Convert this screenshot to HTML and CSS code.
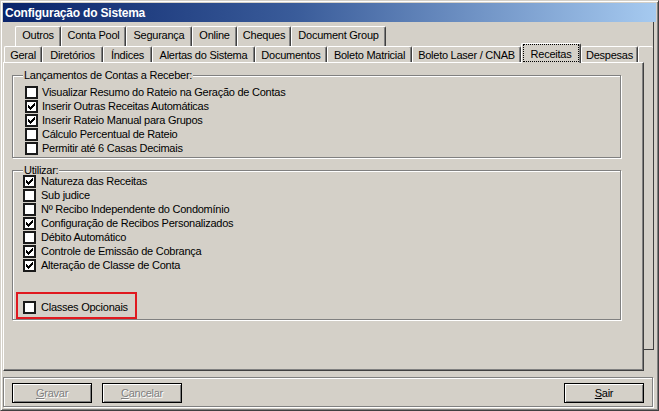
FILE: index.html
```html
<!DOCTYPE html>
<html lang="pt-BR">
<head>
<meta charset="utf-8">
<title>Configuração do Sistema</title>
<link rel="stylesheet" href="styles.css">
</head>
<body>
<div class="window">
  <div class="titlebar">Configuração do Sistema</div>
  <div class="client">
    <div class="frame"></div>
    <div class="tabcontrol">
      <div class="tabrow back">
        <div class="tab t-outros">Outros</div>
        <div class="tab t-contapool">Conta Pool</div>
        <div class="tab t-seguranca">Segurança</div>
        <div class="tab t-online">Online</div>
        <div class="tab t-cheques">Cheques</div>
        <div class="tab t-docgroup">Document Group</div>
      </div>
      <div class="tabrow front">
        <div class="tab t-geral">Geral</div>
        <div class="tab t-diretorios">Diretórios</div>
        <div class="tab t-indices">Índices</div>
        <div class="tab t-alertas">Alertas do Sistema</div>
        <div class="tab t-documentos">Documentos</div>
        <div class="tab t-matricial">Boleto Matricial</div>
        <div class="tab t-laser">Boleto Laser / CNAB</div>
        <div class="tab t-receitas selected"><span class="focus">Receitas</span></div>
        <div class="tab t-despesas">Despesas</div>
        <div class="tab stub"></div>
      </div>
      <div class="page">
        <div class="group g1">
          <div class="legend">Lançamentos de Contas a Receber:</div>
          <div class="item"><span class="cb"></span>Visualizar Resumo do Rateio na Geração de Contas</div>
          <div class="item"><span class="cb"><svg class="check" viewBox="0 0 9 9" width="9" height="9"><path d="M1 3h1v3H1zM2 4h1v3H2zM3 5h1v3H3zM4 4h1v3H4zM5 3h1v3H5zM6 2h1v3H6zM7 1h1v3H7z"/></svg></span>Inserir Outras Receitas Automáticas</div>
          <div class="item"><span class="cb"><svg class="check" viewBox="0 0 9 9" width="9" height="9"><path d="M1 3h1v3H1zM2 4h1v3H2zM3 5h1v3H3zM4 4h1v3H4zM5 3h1v3H5zM6 2h1v3H6zM7 1h1v3H7z"/></svg></span>Inserir Rateio Manual para Grupos</div>
          <div class="item"><span class="cb"></span>Cálculo Percentual de Rateio</div>
          <div class="item"><span class="cb"></span>Permitir até 6 Casas Decimais</div>
        </div>
        <div class="group g2">
          <div class="legend">Utilizar:</div>
          <div class="item"><span class="cb"><svg class="check" viewBox="0 0 9 9" width="9" height="9"><path d="M1 3h1v3H1zM2 4h1v3H2zM3 5h1v3H3zM4 4h1v3H4zM5 3h1v3H5zM6 2h1v3H6zM7 1h1v3H7z"/></svg></span>Natureza das Receitas</div>
          <div class="item"><span class="cb"></span>Sub judice</div>
          <div class="item"><span class="cb"></span>Nº Recibo Independente do Condomínio</div>
          <div class="item"><span class="cb"><svg class="check" viewBox="0 0 9 9" width="9" height="9"><path d="M1 3h1v3H1zM2 4h1v3H2zM3 5h1v3H3zM4 4h1v3H4zM5 3h1v3H5zM6 2h1v3H6zM7 1h1v3H7z"/></svg></span>Configuração de Recibos Personalizados</div>
          <div class="item"><span class="cb"></span>Débito Automático</div>
          <div class="item"><span class="cb"><svg class="check" viewBox="0 0 9 9" width="9" height="9"><path d="M1 3h1v3H1zM2 4h1v3H2zM3 5h1v3H3zM4 4h1v3H4zM5 3h1v3H5zM6 2h1v3H6zM7 1h1v3H7z"/></svg></span>Controle de Emissão de Cobrança</div>
          <div class="item"><span class="cb"><svg class="check" viewBox="0 0 9 9" width="9" height="9"><path d="M1 3h1v3H1zM2 4h1v3H2zM3 5h1v3H3zM4 4h1v3H4zM5 3h1v3H5zM6 2h1v3H6zM7 1h1v3H7z"/></svg></span>Alteração de Classe de Conta</div>
          <div class="highlight">
            <div class="item"><span class="cb"></span>Classes Opcionais</div>
          </div>
        </div>
      </div>
    </div>
    <div class="buttonbar">
      <div class="btn disabled"><u>G</u>ravar</div>
      <div class="btn disabled"><u>C</u>ancelar</div>
      <div class="btn right"><u>S</u>air</div>
    </div>
  </div>
</div>
</body>
</html>
```
FILE: styles.css
```css
html, body {
  margin: 0;
  padding: 0;
  background: #d4d0c8;
}

body {
  font-family: "Liberation Sans", Arial, sans-serif;
  font-size: 11px;
  letter-spacing: -0.25px;
  color: #000;
}

.window {
  width: 659px;
  height: 411px;
  box-sizing: border-box;
  border: 1px solid;
  border-color: #d4d0c8 #404040 #404040 #d4d0c8;
  box-shadow: inset 1px 1px #fff, inset -1px -1px #808080;
  padding: 2px;
  background: #d4d0c8;
  overflow: hidden;
}

.titlebar {
  height: 19px;
  box-sizing: border-box;
  padding: 1px 0 0 2px;
  line-height: 18px;
  font-size: 12px;
  font-weight: bold;
  letter-spacing: -0.2px;
  color: #fff;
  background: linear-gradient(to right, #0a246a 0%, #3a5c9a 45%, #a6caf0 100%);
  white-space: nowrap;
}

.client {
  display: grid;
  grid-template-columns: 653px;
  grid-template-rows: auto auto;
}

.frame {
  grid-area: 1 / 1;
  align-self: start;
  width: 651px;
  height: 328px;
  box-sizing: border-box;
  border-right: 1px solid #404040;
  border-bottom: 1px solid #404040;
}

.tabcontrol {
  grid-area: 1 / 1;
  padding-top: 4px;
}

.tabrow {
  display: flex;
  align-items: flex-end;
}

.tabrow.back {
  height: 20px;
  padding-left: 12px;
}

.tabrow.front {
  height: 16px;
  padding-left: 1px;
}

.tab {
  flex: none;
  box-sizing: border-box;
  background: #d4d0c8;
  border-top: 1px solid #fff;
  border-left: 1px solid #fff;
  border-right: 1px solid #404040;
  box-shadow: inset -1px 0 #808080;
  border-radius: 2px 2px 0 0;
  padding: 0;
  text-align: center;
  white-space: nowrap;
}

.back .tab {
  height: 20px;
  line-height: 17px;
}

.front .tab {
  height: 16px;
  padding-top: 2px;
  line-height: 13px;
}

/* tab widths */
.t-outros { width: 46px; }
.t-contapool { width: 65px; }
.t-seguranca { width: 66px; }
.t-online { width: 45px; }
.t-cheques { width: 54px; }
.t-docgroup { width: 95px; }

.t-geral { width: 38px; }
.t-diretorios { width: 61px; }
.t-indices { width: 49px; }
.t-alertas { width: 103px; }
.t-documentos { width: 72px; }
.t-matricial { width: 85px; }
.t-laser { width: 109px; }
.t-receitas { width: 60px; }
.t-despesas { width: 57px; }

.front .tab.selected {
  position: relative;
  z-index: 1;
  height: 20px;
  margin-bottom: -1px;
  padding: 0 1px 1px 1px;
  line-height: 14px;
}

.focus {
  display: block;
  border: 1px dotted #000;
  padding: 2px 0 0 0;
  text-align: center;
}

.front .tab.stub {
  width: 15px;
  border-right: none;
  box-shadow: none;
  padding: 0;
}

.page {
  width: 641px;
  height: 309px;
  box-sizing: border-box;
  background: #d4d0c8;
  border-top: 1px solid #fff;
  border-left: 1px solid #fff;
  border-right: 1px solid #404040;
  border-bottom: 1px solid #404040;
  box-shadow: inset -1px -1px #808080;
  padding-top: 12px;
  padding-left: 8px;
}

.group {
  width: 609px;
  box-sizing: border-box;
  border: 1px solid #808080;
  box-shadow: inset 1px 1px #fff, 1px 1px #fff;
  padding: 0 0 2px 0;
}

.g2 {
  margin-top: 12px;
}

.legend {
  width: fit-content;
  background: #d4d0c8;
  line-height: 12px;
  padding: 0 1px;
  margin: -7px 0 4px 10px;
  white-space: nowrap;
}

.g2 .legend {
  margin-bottom: -2px;
}

.item {
  display: flex;
  align-items: center;
  height: 14px;
  line-height: 14px;
  white-space: nowrap;
}

.g1 .item {
  margin-left: 12px;
  gap: 4px;
}

.g2 .item {
  margin-left: 10px;
  gap: 5px;
}

.cb {
  flex: none;
  width: 13px;
  height: 13px;
  box-sizing: border-box;
  border: 2px solid #1a1a1a;
  background: #fff;
  display: flex;
}

.check {
  display: block;
  fill: #000;
  shape-rendering: crispEdges;
}

.highlight {
  width: 121px;
  height: 27px;
  box-sizing: border-box;
  border: 2px solid #e0191f;
  margin: 20px 0 -2px 3px;
  padding: 6px 0 0 5px;
}

.g2 .highlight .item {
  margin-left: 0;
}

.buttonbar {
  grid-row: 2;
  margin-top: 6px;
  width: 650px;
  height: 30px;
  box-sizing: border-box;
  border: 1px solid #808080;
  box-shadow: inset 1px 1px #fff, 1px 1px #fff;
  padding: 5px 8px;
  display: flex;
  gap: 10px;
}

.btn {
  width: 80px;
  height: 20px;
  box-sizing: border-box;
  border: 1px solid #000;
  box-shadow: inset 1px 1px #fff, inset -1px -1px #808080;
  text-align: center;
  line-height: 18px;
}

.btn.disabled {
  color: #808080;
  text-shadow: 1px 1px #fff;
}

.btn.right {
  margin-left: auto;
}
```
